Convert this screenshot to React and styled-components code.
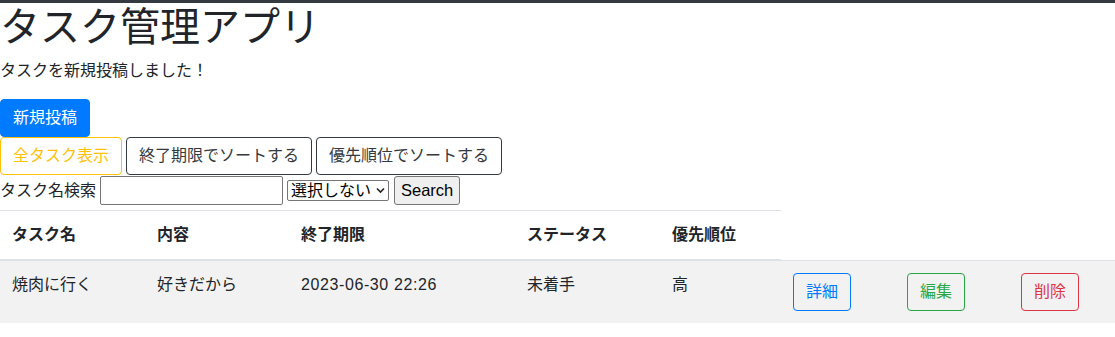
import React from 'react';
import styled, { createGlobalStyle, css } from 'styled-components';

const GlobalStyle = createGlobalStyle`
  html, body {
    margin: 0;
    padding: 0;
    background: #fff;
  }
  body {
    font-family: "Liberation Sans", "Noto Sans CJK JP", sans-serif;
    font-size: 16px;
    line-height: 1.5;
    color: #212529;
  }
  * {
    box-sizing: border-box;
  }
`;

const Page = styled.div`
  border-top: 3px solid #343a40;
`;

const Title = styled.h1`
  margin: 0 0 8px;
  font-size: 40px;
  font-weight: 400;
  line-height: 1.2;
`;

const Notice = styled.p`
  margin: 0 0 16px;
`;

const colors = {
  primary: '#007bff',
  success: '#28a745',
  danger: '#dc3545',
  warning: '#ffc107',
  dark: '#343a40',
};

const Btn = styled.button`
  display: inline-flex;
  align-items: center;
  justify-content: center;
  vertical-align: top;
  height: 38px;
  padding: 6px 12px;
  font-family: inherit;
  font-size: 16px;
  line-height: 1.5;
  border-radius: 4px;
  border: 1px solid ${(p) => colors[p.$tone]};
  cursor: pointer;
  white-space: nowrap;
  ${(p) =>
    p.$solid
      ? css`
          background: ${colors[p.$tone]};
          color: #fff;
        `
      : css`
          background: transparent;
          color: ${colors[p.$tone]};
        `}
`;

const ButtonRow = styled.div`
  display: flex;
  gap: 4px;
`;

const SearchForm = styled.form`
  display: flex;
  align-items: center;
  margin: 1px 0 5px;
  height: 29px;
`;

const Label = styled.label`
  margin-right: 4px;
`;

const TextInput = styled.input`
  width: 183px;
  height: 29px;
  margin: 0 4px 0 0;
  padding: 1px 2px;
  font-family: inherit;
  font-size: 16px;
  border: 1px solid #767676;
  border-radius: 2px;
  background: #fff;
`;

const SelectWrap = styled.span`
  position: relative;
  display: inline-block;
  margin-right: 5px;
`;

const Select = styled.select`
  appearance: none;
  display: block;
  width: 102px;
  height: 21px;
  padding: 0 16px 0 3px;
  font-family: inherit;
  font-size: 16px;
  line-height: 19px;
  color: #000;
  background: #fff;
  border: 1px solid #767676;
  border-radius: 2px;
`;

const Chevron = styled.svg`
  position: absolute;
  right: 4px;
  top: 7px;
  width: 9px;
  height: 7px;
  pointer-events: none;
`;

const SearchButton = styled.button`
  height: 29px;
  padding: 1px 6px;
  font-family: "Liberation Sans", sans-serif;
  font-size: 16.5px;
  color: #000;
  background: #efefef;
  border: 1px solid #767676;
  border-radius: 3px;
`;

const Table = styled.table`
  width: 100%;
  table-layout: fixed;
  border-collapse: collapse;
  color: #212529;
`;

const Col = styled.col`
  width: ${(p) => p.$w}px;
`;

const Th = styled.th`
  padding: 12px;
  text-align: left;
  vertical-align: bottom;
  font-weight: 700;
  border-top: 1px solid #dee2e6;
  border-bottom: 2px solid #dee2e6;
`;

const Row = styled.tr`
  background: #f2f2f2;
`;

const Td = styled.td`
  padding: 12px;
  vertical-align: top;
  border-top: 1px solid #dee2e6;
  white-space: nowrap;
`;

const DateText = styled.span`
  letter-spacing: 0.6px;
`;

const columns = [145, 144, 226, 145, 121, 114, 114, 106];
const headers = ['タスク名', '内容', '終了期限', 'ステータス', '優先順位'];

const tasks = [
  {
    id: 1,
    name: '焼肉に行く',
    content: '好きだから',
    deadline: '2023-06-30 22:26',
    status: '未着手',
    priority: '高',
  },
];

export default function App() {
  return (
    <Page>
      <GlobalStyle />
      <Title>タスク管理アプリ</Title>
      <Notice>タスクを新規投稿しました！</Notice>
      <Btn $tone="primary" $solid>新規投稿</Btn>
      <ButtonRow>
        <Btn $tone="warning">全タスク表示</Btn>
        <Btn $tone="dark">終了期限でソートする</Btn>
        <Btn $tone="dark">優先順位でソートする</Btn>
      </ButtonRow>
      <SearchForm onSubmit={(e) => e.preventDefault()}>
        <Label htmlFor="search-name">タスク名検索</Label>
        <TextInput id="search-name" type="text" />
        <SelectWrap>
          <Select defaultValue="">
            <option value="">選択しない</option>
            <option value="0">未着手</option>
            <option value="1">着手中</option>
            <option value="2">完了</option>
          </Select>
          <Chevron viewBox="0 0 9 7">
            <path d="M1 1.5 L4.5 5 L8 1.5" fill="none" stroke="#222" strokeWidth="1.6" />
          </Chevron>
        </SelectWrap>
        <SearchButton type="submit">Search</SearchButton>
      </SearchForm>
      <Table>
        <colgroup>
          {columns.map((w, i) => (
            <Col key={i} $w={w} />
          ))}
        </colgroup>
        <thead>
          <tr>
            {headers.map((h) => (
              <Th key={h}>{h}</Th>
            ))}
          </tr>
        </thead>
        <tbody>
          {tasks.map((t) => (
            <Row key={t.id}>
              <Td>{t.name}</Td>
              <Td>{t.content}</Td>
              <Td>
                <DateText>{t.deadline}</DateText>
              </Td>
              <Td>{t.status}</Td>
              <Td>{t.priority}</Td>
              <Td>
                <Btn $tone="primary">詳細</Btn>
              </Td>
              <Td>
                <Btn $tone="success">編集</Btn>
              </Td>
              <Td>
                <Btn $tone="danger">削除</Btn>
              </Td>
            </Row>
          ))}
        </tbody>
      </Table>
    </Page>
  );
}
